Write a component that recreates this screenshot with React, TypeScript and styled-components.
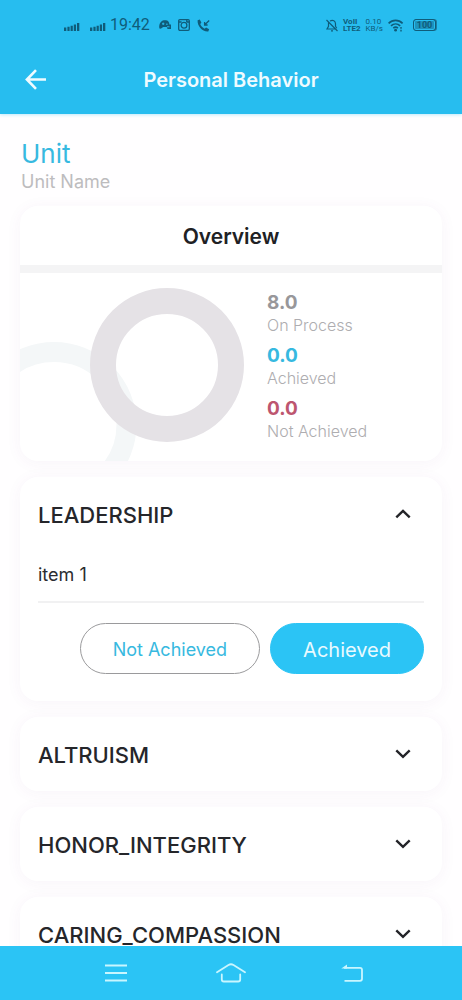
import React, { useState } from 'react';
import styled, { createGlobalStyle } from 'styled-components';

const GlobalStyle = createGlobalStyle`
  * { box-sizing: border-box; }
  body { margin: 0; background: #fffeff; font-family: Inter, "Liberation Sans", sans-serif; }
  button { font-family: inherit; margin: 0; padding: 0; border: 0; background: none; cursor: pointer; }
  h1, h2, h3, p, dl, dd, dt { margin: 0; }
  svg { display: block; }
`;

const Screen = styled.div`
  display: flex;
  flex-direction: column;
  height: 100vh;
`;

const Header = styled.header`
  flex: none;
  background: #27bdef;
  box-shadow: 0 1px 3px rgba(39, 189, 239, 0.3);
`;

const StatusBar = styled.div`
  display: flex;
  align-items: center;
  justify-content: space-between;
  height: 50px;
  padding: 0 26px 0 64px;
  color: #0f5c7a;
`;

const StatusGroup = styled.div<{ $gap: number }>`
  display: flex;
  align-items: center;
  gap: ${(p) => p.$gap}px;
`;

const Clock = styled.span`
  font: 400 16px/20px Roboto, sans-serif;
`;

const TinyStack = styled.span<{ $bold?: boolean }>`
  display: flex;
  flex-direction: column;
  font: ${(p) => (p.$bold ? 700 : 400)} 8px/7px Roboto, sans-serif;
`;

const AppBar = styled.div`
  display: grid;
  grid-template-columns: 32px 1fr 32px;
  align-items: center;
  height: 64px;
  padding: 0 20px 5px;
`;

const BackButton = styled.button`
  display: grid;
  place-items: center;
  height: 32px;
`;

const Title = styled.h1`
  font-size: 20px;
  line-height: 28px;
  font-weight: 600;
  color: #effbff;
  text-align: center;
`;

const Content = styled.main`
  flex: 1;
  min-height: 0;
  overflow-y: auto;
  scrollbar-width: none;
  padding: 24px 20px 16px;
`;

const UnitHeading = styled.div`
  padding-left: 1px;
`;

const UnitTitle = styled.h2`
  font-size: 26px;
  line-height: 32px;
  font-weight: 400;
  color: #37b9e0;
`;

const UnitName = styled.p`
  font-size: 18px;
  line-height: 24px;
  color: #bdbcbe;
`;

const Cards = styled.div`
  display: flex;
  flex-direction: column;
  gap: 16px;
  padding-top: 12px;
`;

const Card = styled.section`
  flex: none;
  overflow: hidden;
  border-radius: 18px;
  background: #fff;
  box-shadow: 0 2px 16px rgba(110, 60, 130, 0.05);
`;

const OverviewTitle = styled.h2`
  height: 67px;
  border-bottom: 8px solid #f4f4f5;
  font-size: 21px;
  line-height: 62px;
  font-weight: 600;
  color: #202124;
  text-align: center;
`;

const OverviewBody = styled.div`
  display: flex;
  height: 188px;
`;

const Stats = styled.dl`
  display: flex;
  flex-direction: column;
  gap: 9px;
  padding: 18px 0 0 23px;
`;

const Stat = styled.div`
  display: flex;
  flex-direction: column-reverse;
`;

const StatLabel = styled.dt`
  font-size: 16px;
  line-height: 20px;
  font-weight: 300;
  color: #aeadb0;
`;

const StatValue = styled.dd<{ $color: string }>`
  font-size: 19px;
  line-height: 24px;
  font-weight: 700;
  color: ${(p) => p.$color};
`;

const Toggle = styled.button`
  display: flex;
  align-items: center;
  justify-content: space-between;
  width: 100%;
  height: 74px;
  padding: 0 31px 0 18px;
  font-size: 22px;
  line-height: 24px;
  font-weight: 500;
  color: #25262a;
  text-align: left;
`;

const ToggleLabel = styled.span`
  padding-top: 1px;
`;

const Panel = styled.div`
  padding: 0 18px 27px;
`;

const Item = styled.p`
  height: 52px;
  padding-top: 12px;
  border-bottom: 2px solid #f1f1f2;
  font-size: 18px;
  line-height: 24px;
  color: #2b2c30;
`;

const Actions = styled.div`
  display: flex;
  justify-content: flex-end;
  gap: 10px;
  padding-top: 20px;
`;

const Pill = styled.button<{ $filled?: boolean }>`
  height: 51px;
  padding: 2px 32px 0;
  border: 1px solid ${(p) => (p.$filled ? '#2bc4f5' : '#9a9a9c')};
  border-radius: 26px;
  background: ${(p) => (p.$filled ? '#2bc4f5' : '#fff')};
  color: ${(p) => (p.$filled ? '#e9faff' : '#37b9e0')};
  font-size: ${(p) => (p.$filled ? 20 : 18)}px;
  line-height: 28px;
`;

const NavBar = styled.nav`
  flex: none;
  display: flex;
  align-items: center;
  justify-content: space-between;
  height: 54px;
  padding: 0 92px;
  background: #2bc4f5;
`;

const NavButton = styled.button`
  display: grid;
  place-items: center;
  width: 48px;
  height: 40px;
`;

function Signal() {
  return (
    <svg width="16" height="14" viewBox="0 0 16 14" fill="currentColor" aria-hidden="true">
      <path d="M0 9.5h2.3V13H0zM3.4 8.7h2.2V13H3.4zM6.6 7.7h2.2V13H6.6zM9.8 6.5H12V13H9.8zM13 5h2.3v8H13z" />
    </svg>
  );
}

function GameIcon() {
  return (
    <svg width="12" height="12" viewBox="0 0 12 12" fill="currentColor" aria-hidden="true">
      <path d="M2.4 2.5C3.4 1 8 .9 9.2 2.2c.8.9 1.2 2 1.2 3.2H12V10H8.5L7.8 8H4.2L2.1 9.6C.7 10.2 0 9.1.2 7.2c.2-2 .8-3.5 2.2-4.7z" />
      <path d="M3 4.8h2.4M4.2 3.6V6M7 5.2h1.7M8 7.8h2.5" fill="none" stroke="#27bdef" />
    </svg>
  );
}

function CameraIcon() {
  return (
    <svg width="12" height="12" viewBox="0 0 12 12" fill="none" stroke="currentColor" strokeWidth="1.3" aria-hidden="true">
      <rect x=".7" y=".7" width="10.6" height="10.6" rx="1.2" />
      <path d="M1 3h2.6M8.5 3H11" />
      <circle cx="6" cy="6.2" r="2.9" />
      <path d="M8.8 1v2" />
    </svg>
  );
}

function CallIcon() {
  return (
    <svg width="13" height="13" viewBox="0 0 13 13" fill="none" stroke="currentColor" aria-hidden="true">
      <path d="M.6 1.3 2.8.6 4.4 3.7 3.2 5.1C4 7 5.6 8.7 7.6 9.7l1.5-1.1 3 1.6-.8 2.2C5.6 13 .2 7.4.6 1.3z" fill="currentColor" stroke="none" />
      <path d="M12.2 1.5 7.8 5.8M7.6 3v3h3" strokeWidth="1.3" />
    </svg>
  );
}

function BellOffIcon() {
  return (
    <svg width="12" height="13" viewBox="0 0 12 13" fill="none" stroke="currentColor" strokeWidth="1.2" aria-hidden="true">
      <path d="M.5 1 11.5 12M2.5 3.4v4L1 10h8.3M4 2c3-1.6 5.5.1 5.5 2.8v2.4l1.2 2M5 11.8h2" />
    </svg>
  );
}

function WifiIcon() {
  return (
    <svg width="16" height="13" viewBox="0 0 16 13" fill="none" stroke="currentColor" strokeWidth="1.6" aria-hidden="true">
      <path d="M.6 4.4c4-4 10-4 14 0M3 6.9c2.8-2.6 6.5-2.6 9.2 0M5.3 9.2c1.5-1.3 3.2-1.3 4.6 0" />
      <circle cx="7.6" cy="11.2" r="1.4" fill="currentColor" stroke="none" />
      <path d="M13 8v1.8M13 10.8v1.8" strokeWidth="1.4" />
    </svg>
  );
}

const Battery = styled.span`
  display: flex;
  align-items: center;
  justify-content: center;
  width: 23px;
  height: 12px;
  border: 1px solid #0f5c7a;
  border-radius: 3px;
  background: #1d93bd;
  box-shadow: inset 0 0 0 1px #27bdef, 1px 0 0 #1d7ea3;
  font: 700 9px/10px Roboto, sans-serif;
`;

function Chevron({ up }: { up?: boolean }) {
  return (
    <svg width="16" height="10" viewBox="0 0 16 10" fill="none" stroke="#242529" strokeWidth="2.4" aria-hidden="true">
      <path d={up ? 'M1.3 8.4 8 1.9l6.7 6.5' : 'M1.3 1.4 8 7.9l6.7-6.5'} />
    </svg>
  );
}

function ProgressChart() {
  return (
    <svg width="224" height="188" viewBox="0 0 224 188" fill="none" role="img" aria-label="Progress">
      <circle cx="34" cy="151.5" r="72.5" stroke="#f4f7f8" strokeWidth="20" />
      <circle cx="147" cy="92" r="64" stroke="#e5e2e6" strokeWidth="26" />
    </svg>
  );
}

const stats = [
  { value: '8.0', label: 'On Process', color: '#98979a' },
  { value: '0.0', label: 'Achieved', color: '#37b9e0' },
  { value: '0.0', label: 'Not Achieved', color: '#bd5670' },
];

const sections = ['LEADERSHIP', 'ALTRUISM', 'HONOR_INTEGRITY', 'CARING_COMPASSION'];

export default function App() {
  const [open, setOpen] = useState<string | null>('LEADERSHIP');

  return (
    <Screen>
      <GlobalStyle />
      <Header>
        <StatusBar>
          <StatusGroup $gap={4}>
            <StatusGroup $gap={10}>
              <Signal />
              <Signal />
            </StatusGroup>
            <StatusGroup $gap={9}>
              <Clock>19:42</Clock>
              <StatusGroup $gap={7}>
                <GameIcon />
                <CameraIcon />
                <CallIcon />
              </StatusGroup>
            </StatusGroup>
          </StatusGroup>
          <StatusGroup $gap={9}>
            <StatusGroup $gap={5}>
              <BellOffIcon />
              <TinyStack $bold>
                <span>VoII</span>
                <span>LTE2</span>
              </TinyStack>
              <TinyStack>
                <span>0.10</span>
                <span>KB/s</span>
              </TinyStack>
              <WifiIcon />
            </StatusGroup>
            <Battery>100</Battery>
          </StatusGroup>
        </StatusBar>
        <AppBar>
          <BackButton aria-label="Back">
            <svg width="22" height="22" viewBox="0 0 22 22" fill="none" stroke="#effbff" strokeWidth="2.6" aria-hidden="true">
              <path d="M21 10.5H2.5M11 1.2 1.9 10.5l9.1 9.3" />
            </svg>
          </BackButton>
          <Title>Personal Behavior</Title>
        </AppBar>
      </Header>

      <Content>
        <UnitHeading>
          <UnitTitle>Unit</UnitTitle>
          <UnitName>Unit Name</UnitName>
        </UnitHeading>
        <Cards>
          <Card>
            <OverviewTitle>Overview</OverviewTitle>
            <OverviewBody>
              <ProgressChart />
              <Stats>
                {stats.map((s) => (
                  <Stat key={s.label}>
                    <StatLabel>{s.label}</StatLabel>
                    <StatValue $color={s.color}>{s.value}</StatValue>
                  </Stat>
                ))}
              </Stats>
            </OverviewBody>
          </Card>
          {sections.map((name) => (
            <Card key={name}>
              <h3>
                <Toggle
                  aria-expanded={open === name}
                  onClick={() => setOpen(open === name ? null : name)}
                >
                  <ToggleLabel>{name}</ToggleLabel>
                  <Chevron up={open === name} />
                </Toggle>
              </h3>
              {open === name && (
                <Panel>
                  <Item>item 1</Item>
                  <Actions>
                    <Pill>Not Achieved</Pill>
                    <Pill $filled>Achieved</Pill>
                  </Actions>
                </Panel>
              )}
            </Card>
          ))}
        </Cards>
      </Content>

      <NavBar aria-label="System">
        <NavButton aria-label="Recent apps">
          <svg width="22" height="18" viewBox="0 0 22 18" stroke="#c9f6ff" strokeWidth="1.8" aria-hidden="true">
            <path d="M0 1.5h22M0 9h22M0 16.5h22" />
          </svg>
        </NavButton>
        <NavButton aria-label="Home">
          <svg width="30" height="20" viewBox="0 0 30 20" fill="none" stroke="#c9f6ff" strokeWidth="1.8" strokeLinecap="round" strokeLinejoin="round" aria-hidden="true">
            <path d="M1 9.2 12.5 2q2.5-1.5 5 0L29 9.2M5.8 11.5v5q0 2 2 2h14.4q2 0 2-2v-5" />
          </svg>
        </NavButton>
        <NavButton aria-label="Go back">
          <svg width="34" height="18" viewBox="-12 0 34 18" fill="none" stroke="#c9f6ff" strokeWidth="1.8" strokeLinejoin="round" aria-hidden="true">
            <path d="M3 3.8h16q2 0 2 2v9q0 2-2 2H3.5" />
            <path d="M.3 4.4 6 .6v3.8z" fill="#c9f6ff" stroke="none" />
          </svg>
        </NavButton>
      </NavBar>
    </Screen>
  );
}
